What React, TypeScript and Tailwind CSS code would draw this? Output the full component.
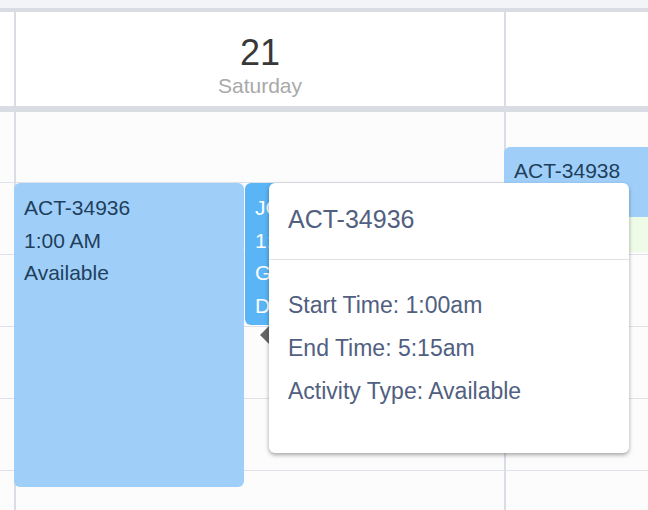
import React from "react";

const rows = [70, 71, 71, 71, 71, 39];

export default function App() {
  return (
    <div
      className="relative w-[648px] h-[510px] overflow-hidden bg-[#fcfcfd]"
      style={{ fontFamily: '"Liberation Sans", Arial, sans-serif' }}
    >
      {/* top strip */}
      <div className="h-[8px] bg-[#f3f4f8]" />
      <div className="h-[4px] bg-[#dadce4]" />
      {/* header */}
      <div className="flex h-[94px] bg-white">
        <div className="w-[16px] border-r-2 border-[#dadce4]" />
        <div className="w-[490px] border-r-2 border-[#dadce4] flex flex-col items-center pt-[21px]">
          <div className="text-[36px] leading-[40px] text-[#383838]">21</div>
          <div className="text-[21px] leading-[24px] text-[#a9a9a9] mt-[1px]">Saturday</div>
        </div>
        <div className="flex-1" />
      </div>
      <div className="h-[6px] bg-[#dadce4]" />
      {/* body grid */}
      <div className="flex flex-col">
        {rows.map((h, i) => (
          <div
            key={i}
            className={
              i < rows.length - 1
                ? "flex border-b border-[#dfe1e8]"
                : "flex"
            }
            style={{ height: h + (i < rows.length - 1 ? 1 : 0) }}
          >
            <div className="w-[16px] border-r-2 border-[#dadce4]" />
            <div className="w-[490px] border-r-2 border-[#dadce4]" />
            <div className="flex-1" />
          </div>
        ))}
      </div>

      {/* right event */}
      <div className="absolute left-[504px] top-[147px] w-[150px] h-[70px] rounded-t-[6px] bg-[#9fcff9] pl-[10px] pt-[8px] text-[21px] leading-[32.5px] text-[#213f5c]">
        ACT-34938
      </div>
      <div className="absolute left-[504px] top-[217px] w-[150px] h-[35px] bg-[#eefbe7]" />

      {/* event 1 */}
      <div className="absolute left-[14px] top-[183px] w-[230px] h-[304px] rounded-[6px] bg-[#9fcff9] pl-[10px] pt-[9px] text-[21px] leading-[32.5px] text-[#213f5c]">
        <div>ACT-34936</div>
        <div>1:00 AM</div>
        <div>Available</div>
      </div>

      {/* event 2 */}
      <div className="absolute left-[245px] top-[183px] w-[40px] h-[142px] rounded-[6px] bg-[#59b5f6] pl-[10px] pt-[9px] text-[21px] leading-[32.5px] text-white whitespace-nowrap overflow-hidden">
        <div>JOB</div>
        <div>1:00</div>
        <div>Gen</div>
        <div>Def</div>
      </div>

      {/* popover arrow */}
      <svg className="absolute left-[259px] top-[326px]" width="11" height="18" viewBox="0 0 11 18">
        <polygon points="1,9 10,0 10,18" fill="#666666" />
      </svg>

      {/* popover */}
      <div className="absolute left-[269px] top-[183px] w-[360px] h-[270px] rounded-[6px] bg-white shadow-[0_2px_4px_rgba(0,0,0,0.35)] text-[#51607f]">
        <div className="h-[77px] border-b border-[#dfe1e6] px-[19px] pt-[22px] text-[25px] leading-[29px]">
          ACT-34936
        </div>
        <div className="px-[19px] pt-[24px] text-[23px] leading-[43px]">
          <div>Start Time: 1:00am</div>
          <div>End Time: 5:15am</div>
          <div>Activity Type: Available</div>
        </div>
      </div>
    </div>
  );
}
